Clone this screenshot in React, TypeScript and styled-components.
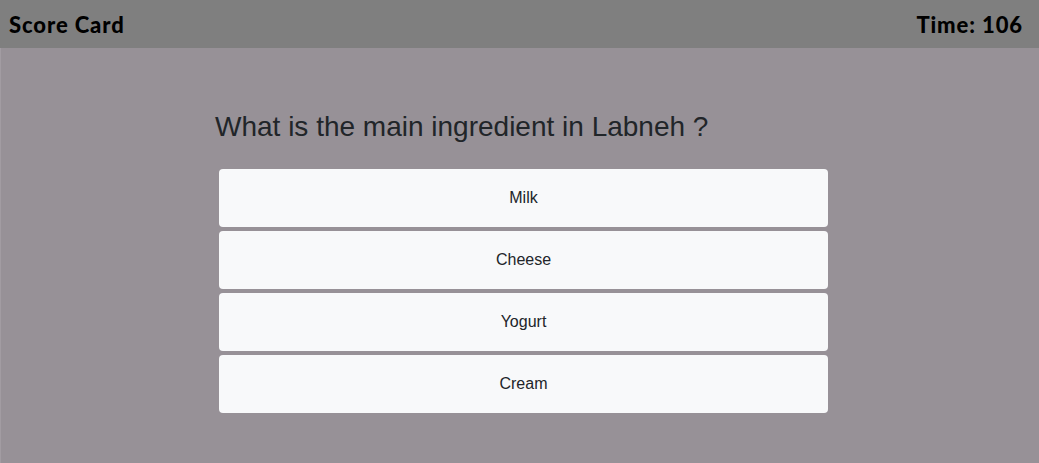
import React from "react";
import styled, { createGlobalStyle } from "styled-components";

const Global = createGlobalStyle`
  html, body { margin: 0; padding: 0; }
  body { background: #979197; font-family: "Liberation Sans", Arial, sans-serif; }
`;

const Page = styled.div`
  min-height: 463px;
  background: #979197;
  box-shadow: inset 1px 0 0 #a29ca2;
`;

const Header = styled.header`
  height: 48px;
  background: #7f7f7f;
  display: flex;
  align-items: center;
  justify-content: space-between;
  padding: 0 16px 0 9px;
  box-sizing: border-box;
`;

const HeaderText = styled.span`
  font-family: "Lato", "Liberation Sans", sans-serif;
  font-weight: 900;
  font-size: 22px;
  color: #000;
  letter-spacing: 0.9px;
`;

const Main = styled.main`
  display: flex;
  justify-content: center;
  padding: 60px 0 0 8px;
`;

const Quiz = styled.section`
  width: 617px;
  display: flex;
  flex-direction: column;
`;

const Question = styled.h2`
  margin: 0 0 23px 0;
  font-size: 28px;
  font-weight: 400;
  line-height: 38px;
  color: #212529;
`;

const Options = styled.div`
  display: flex;
  flex-direction: column;
  gap: 4px;
  padding: 0 4px;
`;

const Option = styled.button`
  height: 58px;
  border: none;
  border-radius: 4px;
  background: #f8f9fa;
  color: #212529;
  font-family: "Liberation Sans", Arial, sans-serif;
  font-size: 16px;
  cursor: pointer;
`;

const answers = ["Milk", "Cheese", "Yogurt", "Cream"];

export default function App() {
  return (
    <>
      <Global />
      <Page>
        <Header>
          <HeaderText>Score Card</HeaderText>
          <HeaderText>Time: 106</HeaderText>
        </Header>
        <Main>
          <Quiz>
            <Question>What is the main ingredient in Labneh ?</Question>
            <Options>
              {answers.map((a) => (
                <Option key={a}>{a}</Option>
              ))}
            </Options>
          </Quiz>
        </Main>
      </Page>
    </>
  );
}
